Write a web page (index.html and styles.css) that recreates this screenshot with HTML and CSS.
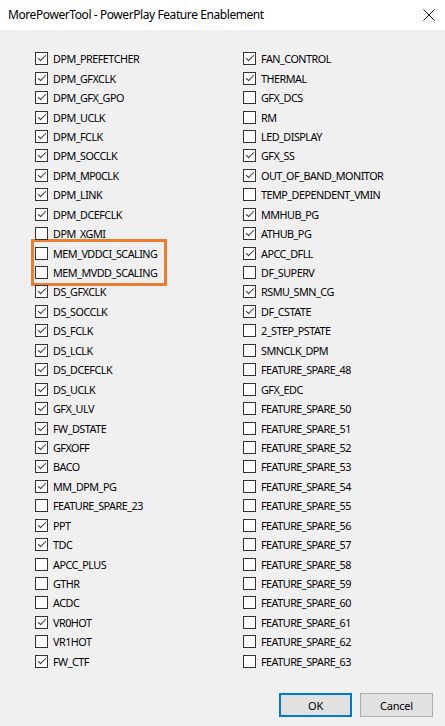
FILE: index.html
```html
<!DOCTYPE html>
<html>
<head>
<meta charset="utf-8">
<link rel="stylesheet" href="styles.css">
</head>
<body>
<div class="window">
  <div class="titlebar">
    <span class="title">MorePowerTool - PowerPlay Feature Enablement</span>
    <svg class="close" width="12" height="12" viewBox="0 0 12 12"><path d="M0.5 0.5 L11.5 11.5 M11.5 0.5 L0.5 11.5" stroke="#111" stroke-width="1" fill="none"/></svg>
  </div>
  <div class="content">
    <div class="columns">
      <div class="col">
        <label class="row"><span class="cb on"></span>DPM_PREFETCHER</label>
        <label class="row"><span class="cb on"></span>DPM_GFXCLK</label>
        <label class="row"><span class="cb on"></span>DPM_GFX_GPO</label>
        <label class="row"><span class="cb on"></span>DPM_UCLK</label>
        <label class="row"><span class="cb on"></span>DPM_FCLK</label>
        <label class="row"><span class="cb on"></span>DPM_SOCCLK</label>
        <label class="row"><span class="cb on"></span>DPM_MP0CLK</label>
        <label class="row"><span class="cb on"></span>DPM_LINK</label>
        <label class="row"><span class="cb on"></span>DPM_DCEFCLK</label>
        <label class="row"><span class="cb"></span>DPM_XGMI</label>
        <div class="highlight">
          <label class="row"><span class="cb"></span>MEM_VDDCI_SCALING</label>
          <label class="row"><span class="cb"></span>MEM_MVDD_SCALING</label>
        </div>
        <label class="row"><span class="cb on"></span>DS_GFXCLK</label>
        <label class="row"><span class="cb on"></span>DS_SOCCLK</label>
        <label class="row"><span class="cb on"></span>DS_FCLK</label>
        <label class="row"><span class="cb on"></span>DS_LCLK</label>
        <label class="row"><span class="cb on"></span>DS_DCEFCLK</label>
        <label class="row"><span class="cb on"></span>DS_UCLK</label>
        <label class="row"><span class="cb on"></span>GFX_ULV</label>
        <label class="row"><span class="cb on"></span>FW_DSTATE</label>
        <label class="row"><span class="cb on"></span>GFXOFF</label>
        <label class="row"><span class="cb on"></span>BACO</label>
        <label class="row"><span class="cb on"></span>MM_DPM_PG</label>
        <label class="row"><span class="cb"></span>FEATURE_SPARE_23</label>
        <label class="row"><span class="cb on"></span>PPT</label>
        <label class="row"><span class="cb on"></span>TDC</label>
        <label class="row"><span class="cb"></span>APCC_PLUS</label>
        <label class="row"><span class="cb"></span>GTHR</label>
        <label class="row"><span class="cb"></span>ACDC</label>
        <label class="row"><span class="cb on"></span>VR0HOT</label>
        <label class="row"><span class="cb"></span>VR1HOT</label>
        <label class="row"><span class="cb on"></span>FW_CTF</label>
      </div>
      <div class="col">
        <label class="row"><span class="cb on"></span>FAN_CONTROL</label>
        <label class="row"><span class="cb on"></span>THERMAL</label>
        <label class="row"><span class="cb"></span>GFX_DCS</label>
        <label class="row"><span class="cb"></span>RM</label>
        <label class="row"><span class="cb"></span>LED_DISPLAY</label>
        <label class="row"><span class="cb on"></span>GFX_SS</label>
        <label class="row"><span class="cb on"></span>OUT_OF_BAND_MONITOR</label>
        <label class="row"><span class="cb"></span>TEMP_DEPENDENT_VMIN</label>
        <label class="row"><span class="cb on"></span>MMHUB_PG</label>
        <label class="row"><span class="cb on"></span>ATHUB_PG</label>
        <label class="row"><span class="cb on"></span>APCC_DFLL</label>
        <label class="row"><span class="cb"></span>DF_SUPERV</label>
        <label class="row"><span class="cb on"></span>RSMU_SMN_CG</label>
        <label class="row"><span class="cb on"></span>DF_CSTATE</label>
        <label class="row"><span class="cb"></span>2_STEP_PSTATE</label>
        <label class="row"><span class="cb"></span>SMNCLK_DPM</label>
        <label class="row"><span class="cb"></span>FEATURE_SPARE_48</label>
        <label class="row"><span class="cb"></span>GFX_EDC</label>
        <label class="row"><span class="cb"></span>FEATURE_SPARE_50</label>
        <label class="row"><span class="cb"></span>FEATURE_SPARE_51</label>
        <label class="row"><span class="cb"></span>FEATURE_SPARE_52</label>
        <label class="row"><span class="cb"></span>FEATURE_SPARE_53</label>
        <label class="row"><span class="cb"></span>FEATURE_SPARE_54</label>
        <label class="row"><span class="cb"></span>FEATURE_SPARE_55</label>
        <label class="row"><span class="cb"></span>FEATURE_SPARE_56</label>
        <label class="row"><span class="cb"></span>FEATURE_SPARE_57</label>
        <label class="row"><span class="cb"></span>FEATURE_SPARE_58</label>
        <label class="row"><span class="cb"></span>FEATURE_SPARE_59</label>
        <label class="row"><span class="cb"></span>FEATURE_SPARE_60</label>
        <label class="row"><span class="cb"></span>FEATURE_SPARE_61</label>
        <label class="row"><span class="cb"></span>FEATURE_SPARE_62</label>
        <label class="row"><span class="cb"></span>FEATURE_SPARE_63</label>
      </div>
    </div>
    <div class="buttons">
      <button class="btn default">OK</button>
      <button class="btn">Cancel</button>
    </div>
  </div>
</div>
</body>
</html>
```

FILE: styles.css
```css
html, body {
  margin: 0;
  padding: 0;
}
body {
  width: 445px;
  height: 726px;
  background: #f0f0f0;
  font-family: "Noto Sans", "DejaVu Sans", sans-serif;
  font-size: 10.8px;
  letter-spacing: -0.5px;
  color: #000;
  overflow: hidden;
}
.titlebar {
  height: 30px;
  background: #fff;
  display: flex;
  align-items: center;
  justify-content: space-between;
  padding: 0 9px 0 8px;
}
.title {
  font-size: 12px;
  letter-spacing: -0.42px;
  color: #000;
  padding-bottom: 1px;
}
.close {
  margin-right: 1px;
}
.content {
  padding: 19px 0 0 35px;
}
.columns {
  display: grid;
  grid-template-columns: 208px 1fr;
}
.col {
  display: flex;
  flex-direction: column;
}
.row {
  height: 19.45px;
  display: flex;
  align-items: center;
  gap: 5px;
  white-space: nowrap;
}
.cb {
  width: 11px;
  height: 11px;
  border: 1px solid #333;
  background: #fff;
  flex: none;
  position: relative;
}
.cb.on::after {
  content: "";
  position: absolute;
  left: 3.5px;
  top: 0px;
  width: 3px;
  height: 7px;
  border-right: 1.2px solid #333;
  border-bottom: 1.2px solid #333;
  transform: rotate(45deg);
}
.highlight {
  width: 128px;
  outline: 3px solid #ed7d31;
  outline-offset: 1px;
}
.buttons {
  display: flex;
  justify-content: flex-end;
  gap: 8px;
  padding: 22px 12px 0 0;
}
.btn {
  width: 73px;
  height: 24px;
  background: #e1e1e1;
  border: 1px solid #adadad;
  font-family: "Noto Sans", "DejaVu Sans", sans-serif;
  font-size: 11px;
  letter-spacing: -0.2px;
  color: #000;
  padding: 0;
  margin: 0;
}
.btn.default {
  border: 2px solid #0078d7;
}
```
